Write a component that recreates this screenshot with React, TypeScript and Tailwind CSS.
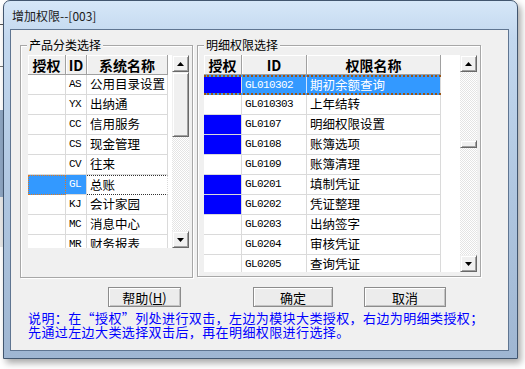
import React from 'react';

type Row = { id: string; name: string; on?: boolean; sel?: boolean };

const leftRows: Row[] = [
  { id: 'AS', name: '公用目录设置' },
  { id: 'YX', name: '出纳通' },
  { id: 'CC', name: '信用服务' },
  { id: 'CS', name: '现金管理' },
  { id: 'CV', name: '往来' },
  { id: 'GL', name: '总账', sel: true },
  { id: 'KJ', name: '会计家园' },
  { id: 'MC', name: '消息中心' },
  { id: 'MR', name: '财务报表' },
];

const rightRows: Row[] = [
  { id: 'GL010302', name: '期初余额查询', on: true, sel: true },
  { id: 'GL010303', name: '上年结转' },
  { id: 'GL0107', name: '明细权限设置', on: true },
  { id: 'GL0108', name: '账簿选项', on: true },
  { id: 'GL0109', name: '账簿清理' },
  { id: 'GL0201', name: '填制凭证', on: true },
  { id: 'GL0202', name: '凭证整理', on: true },
  { id: 'GL0203', name: '出纳签字' },
  { id: 'GL0204', name: '审核凭证' },
  { id: 'GL0205', name: '查询凭证' },
];

const mono = "font-['Liberation_Mono','DejaVu_Sans_Mono',monospace] text-[11px] tracking-[-0.6px]";

const SbButton = ({ up }: { up?: boolean }) => (
  <div className="h-[17px] w-[17px] shrink-0 flex items-center justify-center bg-[#f0f0f0] border border-t-[#f0f0f0] border-l-[#f0f0f0] border-b-[#696969] border-r-[#696969] shadow-[inset_1px_1px_0_#fff,inset_-1px_-1px_0_#a0a0a0]">
    <svg width="7" height="4" viewBox="0 0 7 4" className="-ml-px">
      <path d={up ? 'M3.5 0L7 4H0Z' : 'M0 0H7L3.5 4Z'} fill="#000" />
    </svg>
  </div>
);

const ScrollBar = ({ thumb }: { thumb: string }) => (
  <div className="w-[17px] h-full flex flex-col shrink-0">
    <SbButton up />
    <div className="flex-1 bg-[repeating-conic-gradient(#ffffff_0_25%,#e4e4e4_0_50%)] bg-[length:2px_2px]">
      <div
        className={`${thumb} w-[17px] bg-[#f0f0f0] border border-t-[#f0f0f0] border-l-[#f0f0f0] border-b-[#696969] border-r-[#696969] shadow-[inset_1px_1px_0_#fff,inset_-1px_-1px_0_#a0a0a0]`}
      />
    </div>
    <SbButton />
  </div>
);

const HeadCell = ({ w, children }: { w: string; children: React.ReactNode }) => (
  <div
    className={`${w} h-[20px] shrink-0 flex items-center justify-center bg-[#f0f0f0] border-r border-b border-[#a0a0a0] shadow-[inset_1px_1px_0_#fff] font-bold text-[14px] leading-none`}
  >
    {children}
  </div>
);

const GroupBox = ({
  label,
  className,
  children,
}: {
  label: string;
  className: string;
  children: React.ReactNode;
}) => (
  <div
    className={`relative shrink-0 border border-[#a7a7a7] shadow-[1px_1px_0_#fff,inset_1px_1px_0_#fff] ${className}`}
  >
    <span className="absolute -top-[9px] left-[6px] px-[2px] bg-[#f0f0f0] text-[12px] leading-[16px]">
      {label}
    </span>
    {children}
  </div>
);

const LeftGrid = () => (
  <div className="w-[161px] h-[193px] flex bg-white overflow-hidden">
    <div className="w-[144px] flex flex-col">
      <div className="flex">
        <HeadCell w="w-[38px]">授权</HeadCell>
        <HeadCell w="w-[21px]">ID</HeadCell>
        <HeadCell w="w-[81px]">系统名称</HeadCell>
        <div className="w-[4px] h-[20px] bg-white" />
      </div>
      {leftRows.map((r) => (
        <div key={r.id} className="flex h-[20px] shrink-0 text-[12.5px] leading-none">
          <div
            className={`w-[38px] h-full border-r border-b border-[#dadada] ${
              r.sel ? 'bg-[#3399ff] border border-dotted border-[#e07a1f]' : ''
            }`}
          />
          <div
            className={`w-[21px] h-full flex items-center pl-[3px] border-r border-b border-[#dadada] ${mono} ${
              r.sel ? 'bg-[#3399ff] text-white' : ''
            }`}
          >
            {r.id}
          </div>
          <div
            className={`w-[81px] h-full flex items-center pl-[3px] border-r border-b border-[#dadada] ${
              r.sel ? 'border-y border-dotted border-y-[#333]' : ''
            }`}
          >
            {r.name}
          </div>
        </div>
      ))}
    </div>
    <ScrollBar thumb="h-[65px]" />
  </div>
);

const RightGrid = () => (
  <div className="w-[273px] h-[217px] flex bg-white overflow-hidden">
    <div className="w-[237px] flex flex-col">
      <div className="flex">
        <HeadCell w="w-[38px]">授权</HeadCell>
        <HeadCell w="w-[65px]">ID</HeadCell>
        <HeadCell w="w-[134px]">权限名称</HeadCell>
      </div>
      {rightRows.map((r) => (
        <div
          key={r.id}
          className={`flex h-[20px] shrink-0 text-[12.5px] leading-none ${
            r.sel ? 'border-y-2 border-dotted border-[#9a5414] bg-[#3399ff]' : ''
          }`}
        >
          <div
            className={`w-[38px] h-full border-r border-[#dadada] ${r.sel ? '' : 'border-b'} ${
              r.on ? 'bg-[#0000ff]' : ''
            }`}
          />
          <div
            className={`w-[65px] h-full flex items-center pl-[3px] border-r border-[#dadada] ${mono} ${
              r.sel ? 'bg-[#3399ff] text-white border-r-[#cfe4ff]' : 'border-b'
            }`}
          >
            {r.id}
          </div>
          <div
            className={`w-[134px] h-full flex items-center pl-[3px] border-r border-[#dadada] ${
              r.sel ? 'bg-[#3399ff] text-white' : 'border-b'
            }`}
          >
            {r.name}
          </div>
        </div>
      ))}
    </div>
    <div className="w-[19px] h-full bg-white" />
    <ScrollBar thumb="mt-[68px] h-[8px]" />
  </div>
);

const Button = ({ w, children }: { w: string; children: React.ReactNode }) => (
  <div
    className={`${w} h-[20px] shrink-0 flex items-center justify-center bg-[#ececec] border border-[#8c8c8c] shadow-[inset_1px_1px_0_#fff,inset_-1px_-1px_0_#c4c4c4] text-[13px] leading-none`}
  >
    {children}
  </div>
);

export default function App() {
  return (
    <div className="w-[525px] h-[369px] bg-white flex overflow-hidden font-['Noto_Sans_CJK_SC',sans-serif] text-black">
      <div className="w-[3px] h-full flex flex-col shrink-0">
        <div className="h-[24px]" />
        <div className="h-px bg-[#555]" />
        <div className="h-[41px]" />
        <div className="h-px bg-[#777]" />
        <div className="h-[43px]" />
        <div className="h-[87px] bg-[#8ea6c2]" />
        <div className="h-[50px] bg-[#e8e8e8]" />
      </div>
      <div className="w-[515px] h-[359px] shrink-0 flex flex-col rounded-t-[7px] border border-[#42566f] bg-[linear-gradient(180deg,#d6e7f8_0%,#c3d8ef_10%,#afc6e0_55%,#9fb6d2_100%)] shadow-[3px_4px_7px_rgba(0,0,0,0.35)]">
        <div className="h-[28px] flex items-center pl-[8px] pt-[2px] text-[12px] text-[#1b1b1b]">
          增加权限--[003]
        </div>
        <div className="ml-[6px] w-[499px] h-[322px] border border-[#5f7591] bg-[#f0f0f0] flex flex-col">
          <div className="flex pt-[15px] pl-[9px] gap-[4px]">
            <GroupBox label="产品分类选择" className="w-[173px] h-[233px] pt-[9px] pl-[7px]">
              <LeftGrid />
            </GroupBox>
            <GroupBox label="明细权限选择" className="w-[284px] h-[232px] pt-[9px] pl-[6px]">
              <RightGrid />
            </GroupBox>
          </div>
          <div className="flex mt-[9px] pl-[97px]">
            <Button w="w-[73px]">
              帮助(<span className="underline">H</span>)
            </Button>
            <div className="w-[72px]" />
            <Button w="w-[80px]">确定</Button>
            <div className="w-[31px]" />
            <Button w="w-[82px]">取消</Button>
          </div>
          <div className="mt-[4px] pl-[17px] text-[13px] tracking-[0.4px] leading-[14px] text-[#0000ff] whitespace-nowrap">
            <div>说明：在“授权”列处进行双击，左边为模块大类授权，右边为明细类授权；</div>
            <div>先通过左边大类选择双击后，再在明细权限进行选择。</div>
          </div>
        </div>
      </div>
    </div>
  );
}
